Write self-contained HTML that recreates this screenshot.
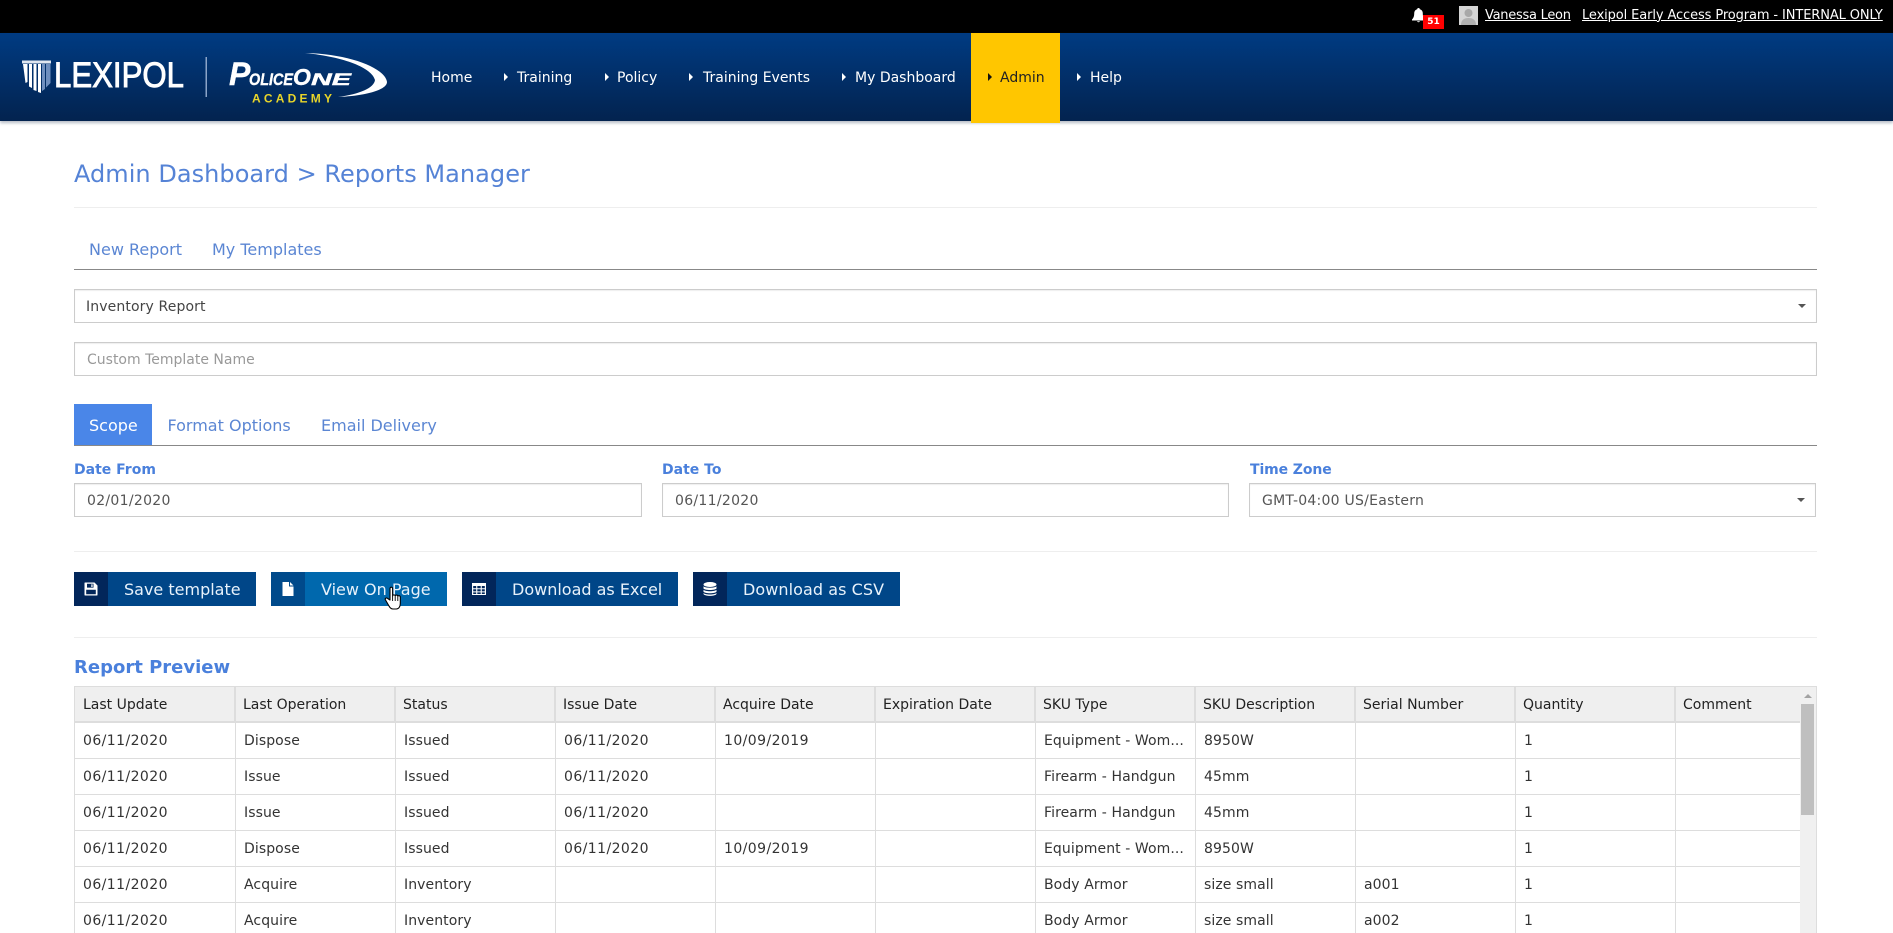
<!DOCTYPE html>
<html><head><meta charset="utf-8"><title>Reports Manager</title>
<style>
*{box-sizing:border-box}
html,body{margin:0;padding:0;background:#fff}
body{width:1893px;height:933px;overflow:hidden;position:relative;font-family:"DejaVu Sans",Verdana,sans-serif;font-size:14px;color:#333}
.a{position:absolute;white-space:nowrap}
.top{left:0;top:0;width:1893px;height:33px;background:#000}
.nav{left:0;top:33px;width:1893px;height:88px;background:linear-gradient(#003b82,#03234f);box-shadow:0 2px 3px rgba(70,85,110,.4)}
.nt{top:67.5px;line-height:20px;font-size:14px;color:#fff}
.ar{top:73px;width:0;height:0;border-left:4px solid #fff;border-top:4px solid transparent;border-bottom:4px solid transparent}
.tl{top:5.500px;line-height:20px;font-size:13px;color:#fff;text-decoration:underline}
.hr{left:74px;width:1743px;height:1px;background:#eee}
.blue{color:#5583d6}
.inp{height:34px;border:1px solid #ccc;background:#fff;line-height:34px;padding-left:12px;font-size:14px;color:#555;box-shadow:inset 0 1px 1px rgba(0,0,0,.07)}
.caret{width:0;height:0;border-top:4px solid #555;border-left:4px solid transparent;border-right:4px solid transparent}
.lab{top:460px;line-height:20px;font-size:14px;font-weight:bold;color:#4a80dc}
.tab{line-height:24px;font-size:16px;color:#5b86d3}
.btn{top:572px;height:34px;background:#004688;color:#e8f2fb;font-size:16px;line-height:35px}
.btn i{position:absolute;left:0;top:0;width:34px;height:34px;background:#02265a}
.btn i svg{position:absolute;left:10px;top:10px}
.btn span{position:absolute;white-space:nowrap}
.wrap{left:74px;top:686px;width:1743px;height:247px;border:1px solid #ddd;border-bottom:0;overflow:hidden}
table{border-collapse:separate;border-spacing:0;table-layout:fixed;width:1725px;position:absolute;left:0;top:0}
th,td{height:36px;padding:0 8px;text-align:left;font-size:14px;font-weight:normal;border-right:1px solid #ddd;border-bottom:1px solid #ddd;white-space:nowrap;overflow:hidden;letter-spacing:.08px}
th{background:#efefef;color:#222;border-bottom:2px solid #ddd;border-right:2px solid #ddd;padding:1px 0 0 7px;letter-spacing:0}
th:first-child{padding-left:8px}
th:last-child,td:last-child{border-right:0}
td{color:#333}
td.d{letter-spacing:.42px}
.sb{position:absolute;right:0;top:0;width:16px;height:247px;background:#f0f0f0}
.th{position:absolute;left:1px;top:17px;width:13px;height:111px;background:#bfbfbf}
.up{position:absolute;left:4px;top:7px;width:0;height:0;border-bottom:4px solid #a3a3a3;border-left:4px solid transparent;border-right:4px solid transparent}
</style></head><body>

<div class="a top"></div>
<svg class="a" style="left:1412px;top:8px" width="13" height="15" viewBox="0 0 13 15"><path d="M6.5 0C5.6 0 5.2.6 5.2 1.3 3.2 1.9 2.2 3.4 2.2 5.6c0 3-1 4.6-2.2 5.9v1h13v-1c-1.200-1.300-2.200-2.900-2.200-5.900 0-2.200-1-3.700-3-4.300C7.800.6 7.400 0 6.500 0zM5 13.200a1.600 1.600 0 0 0 3 0z" fill="#fff"/></svg>
<div class="a" style="left:1423px;top:15px;width:21px;height:14px;background:#f00;color:#fff;font-size:9px;font-weight:bold;line-height:15px;text-align:center">51</div>
<svg class="a" style="left:1459px;top:6px" width="19" height="19" viewBox="0 0 19 19"><rect width="19" height="19" fill="#d4d4d4"/><circle cx="9.500" cy="7" r="4" fill="#a8a8a8"/><path d="M2 19c0-5 3-7 7.500-7s7.500 2 7.500 7z" fill="#b0b0b0"/></svg>
<div class="a tl" style="left:1485px;letter-spacing:-.27px">Vanessa Leon</div>
<div class="a tl" style="left:1582px;letter-spacing:-.11px">Lexipol Early Access Program - INTERNAL ONLY</div>

<div class="a nav"></div>
<div class="a" style="left:971px;top:33px;width:89px;height:90px;background:#ffc600"></div>

<svg class="a" style="left:0;top:33px" width="400" height="88" viewBox="0 33 400 88">
<path d="M22 60.500h29v3H22z" fill="#dfe6f0"/>
<path d="M23 64h4.500v18l-2 1zM29 64h3v24l-3-1.500zM33.500 64h3v27l-3-1zM38 64h3v29l-3-1z" fill="#fff"/>
<path d="M42 64h3v25l-3 2zM46 64h4.500v19l-4.500 4.500z" fill="#6f8fbe"/>
<text x="54" y="87" font-family="Liberation Sans" font-size="35" fill="#fff" stroke="#fff" stroke-width=".9" textLength="130" lengthAdjust="spacingAndGlyphs">LEXIPOL</text>
<rect x="205.500" y="57" width="1.500" height="40" fill="#8ba4c8"/>
<text x="229" y="85" font-family="Liberation Sans" font-weight="bold" font-style="italic" font-size="32" fill="#fff" stroke="#fff" stroke-width=".4">P</text>
<text x="249" y="85" font-family="Liberation Sans" font-weight="bold" font-style="italic" font-size="17" fill="#fff" stroke="#fff" stroke-width=".4" textLength="44" lengthAdjust="spacingAndGlyphs">OLICE</text>
<text x="293" y="85" font-family="Liberation Sans" font-weight="bold" font-style="italic" font-size="23" fill="#fff" stroke="#fff" stroke-width=".4">O</text>
<text x="311" y="85" font-family="Liberation Sans" font-weight="bold" font-style="italic" font-size="17" fill="#fff" stroke="#fff" stroke-width=".4" textLength="40" lengthAdjust="spacingAndGlyphs">NE</text>
<text x="252" y="102.500" font-family="Liberation Sans" font-weight="bold" font-size="12" fill="#e8d52a" textLength="80">ACADEMY</text>
<path d="M305 53C350 54 385 68 387 82 387 90 365 96 338 97 360 94 374 88 375 80 372 68 345 57 305 53Z" fill="#fff"/>
</svg>

<div class="a nt" style="left:431px">Home</div>
<div class="a ar" style="left:504px"></div><div class="a nt" style="left:517px">Training</div>
<div class="a ar" style="left:605px"></div><div class="a nt" style="left:617px">Policy</div>
<div class="a ar" style="left:689px"></div><div class="a nt" style="left:703px">Training Events</div>
<div class="a ar" style="left:842px"></div><div class="a nt" style="left:855px">My Dashboard</div>
<div class="a ar" style="left:988px;border-left-color:#111"></div><div class="a nt" style="left:1000px;color:#222">Admin</div>
<div class="a ar" style="left:1077px"></div><div class="a nt" style="left:1090px">Help</div>

<div class="a blue" style="left:74px;top:159px;line-height:30px;font-size:24px;letter-spacing:.04px">Admin Dashboard &gt; Reports Manager</div>
<div class="a hr" style="top:207px"></div>

<div class="a tab" style="left:89px;top:238px">New Report</div>
<div class="a tab" style="left:212px;top:238px">My Templates</div>
<div class="a" style="left:74px;top:269px;width:1743px;height:1px;background:#888"></div>

<div class="a inp" style="left:74px;top:289px;width:1743px;color:#444;padding-left:11px;letter-spacing:.12px">Inventory Report</div>
<div class="a caret" style="left:1798px;top:304px"></div>
<div class="a inp" style="left:74px;top:342px;width:1743px;color:#999">Custom Template Name</div>

<div class="a" style="left:74px;top:404px;width:78px;height:42px;background:#4a86e8"></div>
<div class="a tab" style="left:89px;top:414px;color:#fff">Scope</div>
<div class="a tab" style="left:167.500px;top:414px">Format Options</div>
<div class="a tab" style="left:321px;top:414px">Email Delivery</div>
<div class="a" style="left:74px;top:445px;width:1743px;height:1px;background:#888"></div>

<div class="a lab" style="left:74px">Date From</div>
<div class="a lab" style="left:662px">Date To</div>
<div class="a lab" style="left:1250px;letter-spacing:-.1px">Time Zone</div>
<div class="a inp" style="left:74px;top:483px;width:568px;letter-spacing:.3px">02/01/2020</div>
<div class="a inp" style="left:662px;top:483px;width:567px;letter-spacing:.3px">06/11/2020</div>
<div class="a inp" style="left:1249px;top:483px;width:567px;letter-spacing:.25px">GMT-04:00 US/Eastern</div>
<div class="a caret" style="left:1797px;top:498px"></div>
<div class="a hr" style="top:551px"></div>

<div class="a btn" style="left:74px;width:182px"><i><svg width="14" height="14" viewBox="0 0 14 14"><path fill="#fff" fill-rule="evenodd" d="M1 .5h9.500l3 3V13a.5.5 0 0 1-.5.5H1a.5.5 0 0 1-.5-.5V1A.5.5 0 0 1 1 .5zM3 1.700V5.600H9.500V1.700zM2.200 7.700V12.300H11.800V7.700z"/><path fill="#fff" d="M7.300 2.300h1.300v2.700H7.300z"/></svg></i><span style="left:50px">Save template</span></div>
<div class="a btn" style="left:271px;width:176px;background:#0068ad"><i style="background:#004a8b"><svg width="14" height="14" viewBox="0 0 14 14"><path fill="#fff" d="M1.500 0H8v4.500h4.500V14h-11zM9 0l3.500 3.500H9z"/></svg></i><span style="left:50px">View On Page</span></div>
<div class="a btn" style="left:462px;width:216px"><i><svg width="14" height="14" viewBox="0 0 14 14"><path fill="#fff" fill-rule="evenodd" d="M0 1h14v12H0zM1.200 4v2.300h3V4zM5.300 4v2.300h3.400V4zM9.800 4v2.300h3V4zM1.200 7.300v2.100h3V7.300zM5.300 7.300v2.100h3.400V7.300zM9.800 7.300v2.100h3V7.300zM1.200 10.400v1.600h3v-1.600zM5.300 10.400v1.600h3.400v-1.600zM9.800 10.400v1.600h3v-1.600z"/></svg></i><span style="left:50px">Download as Excel</span></div>
<div class="a btn" style="left:693px;width:207px"><i><svg width="14" height="14" viewBox="0 0 14 14"><ellipse cx="7" cy="2.500" rx="6.500" ry="2.500" fill="#fff"/><path fill="#fff" d="M.5 4.300C2 6.200 12 6.200 13.500 4.300V6.500C12 8.500 2 8.500.5 6.500zM.5 7.700C2 9.700 12 9.700 13.500 7.700V9.700C12 11.700 2 11.700.5 9.700zM.5 11C2 13 12 13 13.500 11V12C12 14.500 2 14.500.5 12z"/></svg></i><span style="left:50px;letter-spacing:.07px">Download as CSV</span></div>

<div class="a hr" style="top:637px"></div>
<div class="a" style="left:74px;top:656px;line-height:24px;font-size:18px;font-weight:bold;color:#4a80dc">Report Preview</div>

<div class="a wrap">
<table>
<colgroup><col style="width:161px"><col style="width:160px"><col style="width:160px"><col style="width:160px"><col style="width:160px"><col style="width:160px"><col style="width:160px"><col style="width:160px"><col style="width:160px"><col style="width:160px"><col style="width:124px"></colgroup>
<tr><th>Last Update</th><th>Last Operation</th><th>Status</th><th>Issue Date</th><th>Acquire Date</th><th>Expiration Date</th><th>SKU Type</th><th>SKU Description</th><th>Serial Number</th><th>Quantity</th><th>Comment</th></tr>
<tr><td class="d">06/11/2020</td><td>Dispose</td><td>Issued</td><td class="d">06/11/2020</td><td class="d">10/09/2019</td><td></td><td>Equipment - Wom...</td><td>8950W</td><td></td><td>1</td><td></td></tr>
<tr><td class="d">06/11/2020</td><td>Issue</td><td>Issued</td><td class="d">06/11/2020</td><td></td><td></td><td>Firearm - Handgun</td><td>45mm</td><td></td><td>1</td><td></td></tr>
<tr><td class="d">06/11/2020</td><td>Issue</td><td>Issued</td><td class="d">06/11/2020</td><td></td><td></td><td>Firearm - Handgun</td><td>45mm</td><td></td><td>1</td><td></td></tr>
<tr><td class="d">06/11/2020</td><td>Dispose</td><td>Issued</td><td class="d">06/11/2020</td><td class="d">10/09/2019</td><td></td><td>Equipment - Wom...</td><td>8950W</td><td></td><td>1</td><td></td></tr>
<tr><td class="d">06/11/2020</td><td>Acquire</td><td>Inventory</td><td></td><td></td><td></td><td>Body Armor</td><td>size small</td><td>a001</td><td>1</td><td></td></tr>
<tr><td class="d">06/11/2020</td><td>Acquire</td><td>Inventory</td><td></td><td></td><td></td><td>Body Armor</td><td>size small</td><td>a002</td><td>1</td><td></td></tr>
</table>
<div class="sb"><div class="up"></div><div class="th"></div></div>
</div>

<svg class="a" style="left:384px;top:586px" width="20" height="25" viewBox="0 0 20 25"><path d="M6 2.500c0-1.800 2.600-1.800 2.600 0v7.500c.2-1.500 2.500-1.500 2.600 0 .2-1.300 2.500-1.300 2.600.3.400-1 2.400-.8 2.500.7v6.500c0 3-1.500 5.500-4 5.500H9c-2 0-3-1-4-3l-3.500-6c-1-1.600 1-2.800 2.200-1.500L6 14z" fill="#fff" stroke="#000" stroke-width="1.100" stroke-linejoin="round"/><path d="M8.600 10v5M11.200 10.500v4.500M13.800 10.800v4.200" stroke="#000" stroke-width=".9" fill="none"/></svg>

</body></html>
